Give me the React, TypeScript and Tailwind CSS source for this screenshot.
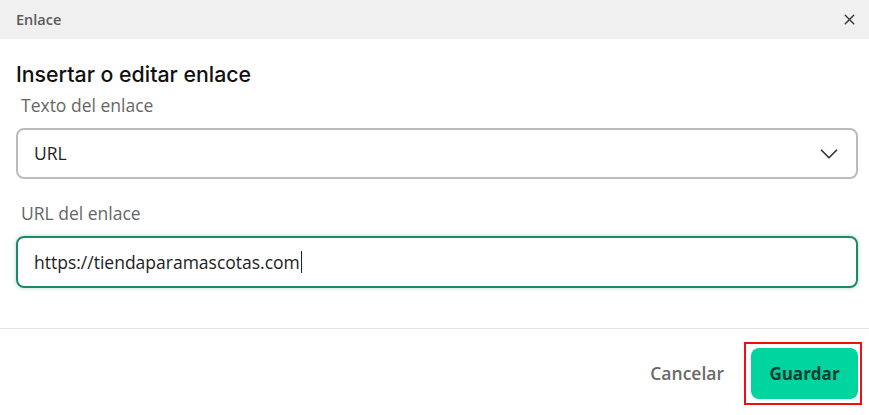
import { X, ChevronDown } from "lucide-react";

const App = () => {
  return (
    <div className="h-[415px] w-[869px] bg-white font-['Open_Sans',sans-serif]">
      <div className="flex h-[39px] items-center justify-between bg-[#f0f0f0] pl-4 pr-[11px]">
        <span className="text-[14.5px] font-semibold text-[#5a5a5a]">Enlace</span>
        <X className="h-[17px] w-[17px] text-[#3a3a3a]" strokeWidth={2} />
      </div>

      <div className="px-4 pt-[21px]">
        <h2 className="font-['Inter',sans-serif] text-[21.3px] font-medium leading-[28px] text-[#111]">
          Insertar o editar enlace
        </h2>
        <label className="mt-[6px] block pl-[5px] text-[17.5px] leading-[22px] text-[#666]">
          Texto del enlace
        </label>
        <div className="mt-[12px] flex h-[51px] w-[842px] items-center justify-between rounded-[8px] border-2 border-[#bcbcbc] pl-[16px] pr-[12px]">
          <span className="text-[17.5px] text-[#222]">URL</span>
          <ChevronDown className="h-[30px] w-[30px] text-[#333]" strokeWidth={1.4} />
        </div>
        <label className="mt-[23px] block pl-[5px] text-[17.5px] leading-[22px] text-[#666]">
          URL del enlace
        </label>
        <div className="mt-[12px] flex h-[52px] w-[842px] items-center rounded-[8px] border-2 border-[#1b8a6b] pl-[16px] shadow-[0_0_4px_rgba(27,138,107,0.35)]">
          <span className="text-[17.5px] text-[#222]">https://tiendaparamascotas.com</span>
          <span className="ml-[1px] h-[22px] w-[1px] bg-[#222]" />
        </div>
      </div>

      <div className="mt-[40px] h-px bg-[#e4e4e4]" />

      <div className="flex items-center justify-end gap-[20px] pr-[7px] pt-[13px]">
        <span className="text-[17.5px] font-semibold text-[#6a6a6a]">Cancelar</span>
        <div className="border-2 border-[#ee1111] py-[4px] pl-[5px] pr-[2px]">
          <button className="flex h-[51px] w-[107px] items-center justify-center rounded-[8px] bg-[#00d49f] text-[17px] font-bold text-[#123d33]">
            Guardar
          </button>
        </div>
      </div>
    </div>
  );
};

export default App;
